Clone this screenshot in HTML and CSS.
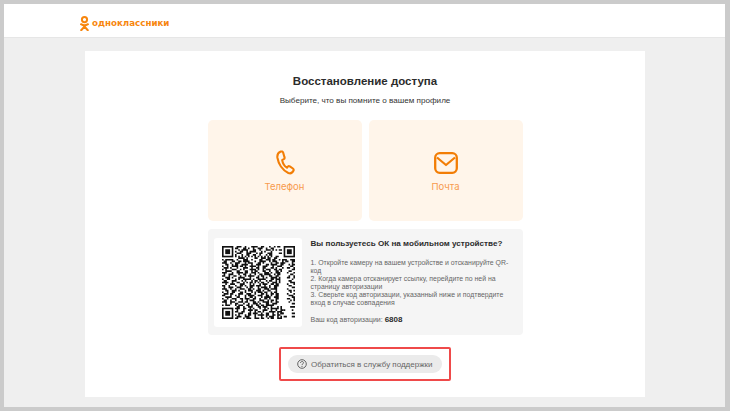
FILE: index.html
```html
<!DOCTYPE html>
<html lang="en">
<head>
    <meta charset="UTF-8">
    <meta name="viewport" content="width=device-width, initial-scale=1.0">
    <title>Восстановление доступа</title>
    <link rel="stylesheet" href="styles.css">
</head>
<body>
    <div class="page">
        <header class="topbar">
            <div class="logo">
                <svg class="logo-icon" viewBox="0 0 9 15" width="9" height="15">
                    <circle cx="4.5" cy="3.6" r="2.6" fill="none" stroke="#f7860e" stroke-width="2"/>
                    <path d="M1 8.2c2.2 1.5 4.8 1.500 7 0M4.5 9.6v.6M1.200 14.200l3.300-3.600 3.300 3.600" fill="none" stroke="#f7860e" stroke-width="2" stroke-linecap="round"/>
                </svg>
                <span class="logo-text">одноклассники</span>
            </div>
        </header>
        <main class="card">
            <h1>Восстановление доступа</h1>
            <p class="subtitle">Выберите, что вы помните о вашем профиле</p>
            <div class="options">
                <div class="option">
                    <div class="option-icon">
                        <svg class="phone-icon" viewBox="0 0 20 26" width="19" height="25">
                            <path d="M5 1.5C2.5 2.5 1 4.5 1.5 8 2.5 14 6.5 21 13 24c2.5 1 4.5-.5 5.5-2.500.3-1 0-1.700-.7-2.200L14.500 17c-.7-.4-1.500-.3-2 .3l-1 1.200C9 17 7 13.500 6.500 10.500l1.700-1c.8-.5 1-1.300.7-2.100L7.500 2.500C7.200 1.600 6 1.100 5 1.500z" fill="none" stroke="#f27d05" stroke-width="2.200" stroke-linejoin="round"/>
                        </svg>
                    </div>
                    <span>Телефон</span>
                </div>
                <div class="option">
                    <div class="option-icon">
                        <svg viewBox="0 0 24 22" width="24" height="22">
                            <rect x="1.200" y="1.200" width="21.600" height="19.600" rx="4.500" fill="none" stroke="#f27d05" stroke-width="2.300"/>
                            <path d="M3 5.500l9 7.500 9-7.500" fill="none" stroke="#f27d05" stroke-width="2.200" stroke-linejoin="round"/>
                        </svg>
                    </div>
                    <span>Почта</span>
                </div>
            </div>
            <section class="qr-panel">
                <div class="qr-box">
                    <svg class="qr" viewBox="0 0 45 45" width="73" height="73">
                        <g fill="none" stroke="#111">
                            <rect x=".5" y=".5" width="6" height="6"/>
                            <rect x="38.500" y=".5" width="6" height="6"/>
                            <rect x=".5" y="38.500" width="6" height="6"/>
                        </g>
                        <g fill="#111">
                            <rect x="2" y="2" width="3" height="3"/>
                            <rect x="40" y="2" width="3" height="3"/>
                            <rect x="2" y="40" width="3" height="3"/>
                        </g>
                        <path fill="none" stroke="#111" d="M9 .5h3m2 0h1m3 0h4m2 0h2m3 0h1m2 0h1
                            M8 1.500h2m3 0h2m1 0h1m2 0h1m2 0h3m2 0h1m2 0h2
                            M10 2.500h1m1 0h4m3 0h2m2 0h1m3 0h3m1 0h1
                            M8 3.500h1m2 0h2m2 0h1m1 0h4m3 0h1m1 0h1m3 0h1
                            M9 4.500h3m3 0h3m3 0h1m1 0h2m3 0h3
                            M8 5.500h1m3 0h1m2 0h2m2 0h2m2 0h1m3 0h1m1 0h2
                            M8 6.500h1m1 0h1m1 0h1m1 0h1m1 0h1m1 0h1m1 0h1m1 0h1m1 0h1m1 0h1m1 0h1m1 0h1
                            M10 7.500h4m1 0h1m4 0h2m2 0h3m1 0h2
                            M0 8.500h1m1 0h5m2 0h1m3 0h3m2 0h1m4 0h2m2 0h3m1 0h2m2 0h1m1 0h3
                            M1 9.500h2m3 0h2m2 0h2m1 0h4m3 0h1m2 0h4m2 0h1m1 0h3m3 0h1m1 0h1
                            M0 10.500h3m2 0h1m2 0h3m3 0h1m1 0h3m3 0h2m1 0h1m4 0h1m2 0h2m1 0h3
                            M2 11.500h2m2 0h1m1 0h2m2 0h4m2 0h1m2 0h3m3 0h2m1 0h4m2 0h2
                            M0 12.500h1m2 0h1m2 0h4m1 0h2m1 0h1m2 0h4m1 0h1m2 0h3m3 0h1m2 0h3
                            M1 13.500h3m1 0h1m3 0h1m3 0h3m2 0h1m2 0h2m2 0h2m3 0h2m1 0h1m3 0h1
                            M0 14.500h1m1 0h1m3 0h3m2 0h1m1 0h1m3 0h4m1 0h1m2 0h1m1 0h3m2 0h2m1 0h2
                            M2 15.500h4m3 0h2m3 0h2m2 0h1m1 0h2m3 0h2m2 0h1m3 0h2m1 0h1
                            M0 16.500h3m3 0h1m2 0h4m1 0h2m2 0h3m1 0h1m3 0h3m1 0h1m2 0h3
                            M1 17.500h1m2 0h3m3 0h1m2 0h2m2 0h1m2 0h1m2 0h2m1 0h4m2 0h1m1 0h2
                            M0 18.500h2m2 0h1m2 0h2m2 0h1m2 0h1m1 0h4m2 0h1m1 0h2m3 0h2m2 0h2
                            M2 19.500h3m1 0h1m3 0h4m3 0h1m3 0h2m2 0h1m1 0h1m2 0h4m1 0h1
                            M0 20.500h1m2 0h2m3 0h1m1 0h1m2 0h5m1 0h1m2 0h5m3 0h2m1 0h3
                            M1 21.500h2m3 0h3m3 0h1m1 0h1m3 0h1m1 0h2m1 0h1m3 0h1m1 0h2m2 0h1m1 0h1
                            M0 22.500h4m2 0h1m2 0h2m2 0h1m1 0h1m1 0h2m1 0h1m1 0h1m1 0h2m2 0h1m2 0h3m1 0h1
                            M2 23.500h1m2 0h3m3 0h3m3 0h1m1 0h1m3 0h1m1 0h3m2 0h2m1 0h2
                            M0 24.500h2m2 0h1m3 0h1m2 0h2m1 0h1m2 0h3m1 0h3m2 0h1m2 0h1m2 0h3
                            M1 25.500h1m2 0h3m2 0h3m3 0h1m1 0h2m3 0h1m1 0h4m1 0h1m2 0h2
                            M0 26.500h3m2 0h1m2 0h1m2 0h3m2 0h2m1 0h1m2 0h2m2 0h3m1 0h4
                            M2 27.500h2m2 0h3m1 0h1m3 0h1m1 0h3m2 0h3m1 0h1m2 0h2m3 0h1
                            M0 28.500h1m2 0h1m2 0h2m3 0h2m1 0h1m3 0h1m1 0h1m1 0h3m1 0h2m2 0h1m1 0h2
                            M1 29.500h3m1 0h2m3 0h3m2 0h3m2 0h1m3 0h2m1 0h1m2 0h2m1 0h2
                            M0 30.500h2m3 0h1m2 0h1m1 0h1m3 0h1m1 0h4m2 0h3m2 0h2m1 0h1m2 0h2
                            M2 31.500h4m3 0h2m3 0h1m2 0h2m1 0h1m3 0h1m1 0h4m2 0h3
                            M0 32.500h1m2 0h1m2 0h3m2 0h2m1 0h3m2 0h2m2 0h1m2 0h2m1 0h1m3 0h2
                            M1 33.500h2m2 0h1m2 0h1m3 0h1m2 0h1m1 0h3m3 0h3m2 0h1m1 0h2m1 0h1
                            M0 34.500h3m2 0h3m2 0h3m1 0h2m3 0h2m1 0h1m2 0h4m1 0h1m2 0h2
                            M2 35.500h1m2 0h1m2 0h2m3 0h1m2 0h1m2 0h3m1 0h1m3 0h2m2 0h3
                            M0 36.500h1m1 0h3m3 0h1m1 0h3m2 0h2m1 0h1m2 0h2m1 0h2m1 0h5
                            M9 37.500h2m2 0h1m2 0h3m3 0h2m1 0h3m2 0h1m3 0h1m1 0h1
                            M8 38.500h3m2 0h2m2 0h1m1 0h1m3 0h1m2 0h1m1 0h1m1 0h5m1 0h1
                            M9 39.500h1m3 0h1m2 0h3m1 0h2m3 0h3m2 0h1m2 0h1m2 0h2
                            M8 40.500h2m2 0h2m3 0h1m2 0h1m1 0h2m1 0h1m3 0h4m1 0h3
                            M10 41.500h3m3 0h2m1 0h3m2 0h1m2 0h2m2 0h1m2 0h1m1 0h2
                            M8 42.500h1m1 0h1m3 0h1m1 0h2m2 0h1m1 0h4m1 0h2m2 0h2m1 0h2
                            M9 43.500h3m2 0h3m3 0h1m3 0h1m2 0h1m1 0h3m2 0h1m1 0h1
                            M8 44.500h2m3 0h1m1 0h3m2 0h3m1 0h2m2 0h1m1 0h2m2 0h3"/>
                        <!-- right edge, rows above run short of the last columns -->
                        <path fill="none" stroke="#111" d="M34 .5h2M33 2.500h1m1 0h2M35 4.500h2M33 6.500h2M32 7.500h2
                            M42 8.500h3M40 9.500h1m2 0h2M43 10.500h1M41 11.500h1m1 0h2M42 12.500h2M40 13.500h2m2 0h1M43 14.500h2M41 15.500h2
                            M40 16.500h1m3 0h1M42 17.500h2M41 18.500h1m2 0h1M40 19.500h2m2 0h1M43 20.500h1M41 21.500h2M42 22.500h3M40 23.500h1m3 0h1
                            M41 24.500h2M43 25.500h2M40 26.500h1M41 27.500h2m1 0h1M42 28.500h1M40 29.500h1m3 0h1M41 30.500h3M43 31.500h2
                            M40 32.500h2m2 0h1M42 33.500h1m1 0h1M41 34.500h1M43 35.500h2M42 37.500h3M38 39.500h1m4 0h1M36 41.500h2m5 0h2M38 43.500h2m3 0h2"/>
                    </svg>
                </div>
                <div class="qr-text">
                    <h2>Вы пользуетесь ОК на мобильном устройстве?</h2>
                    <p class="steps">1. Откройте камеру на вашем устройстве и отсканируйте QR-код<br>
                    2. Когда камера отсканирует ссылку, перейдите по ней на страницу авторизации<br>
                    3. Сверьте код авторизации, указанный ниже и подтвердите вход в случае совпадения</p>
                    <p class="code">Ваш код авторизации: <strong>6808</strong></p>
                </div>
            </section>
            <div class="support-mark">
                <div class="support-btn">
                    <svg viewBox="0 0 10 10" width="10" height="10">
                        <circle cx="5" cy="5" r="4.300" fill="none" stroke="#555" stroke-width=".9"/>
                        <path d="M3.500 4c0-2 3-2 3-.2 0 1.100-1.500 1-1.500 2.200" fill="none" stroke="#555" stroke-width=".9"/>
                        <circle cx="5" cy="7.300" r=".6" fill="#555"/>
                    </svg>
                    <span>Обратиться в службу поддержки</span>
                </div>
            </div>
        </main>
    </div>
</body>
</html>
```
FILE: styles.css
```css
* {
    box-sizing: border-box;
}

body {
    margin: 0;
    height: 411px;
    padding: 4px 5px 4px 4px;
    background-color: #cbcbcb;
    font-family: "Liberation Sans", Arial, sans-serif;
    overflow: hidden;
}

.page {
    height: 403px;
    background-color: #efefef;
}

.topbar {
    height: 34px;
    padding: 5px 0 0 76px;
    background-color: #ffffff;
    border-bottom: 1px solid #e6e6e6;
    display: flex;
    align-items: center;
}

.logo {
    display: flex;
    align-items: center;
    gap: 3px;
}

.logo-text {
    font-family: "DejaVu Sans", sans-serif;
    font-size: 8.700px;
    font-weight: bold;
    color: #f7860e;
}

.card {
    width: 560px;
    height: 346px;
    margin: 13px 0 0 81px;
    padding-top: 23px;
    background-color: #ffffff;
    display: flex;
    flex-direction: column;
    align-items: center;
}

h1 {
    margin: 0;
    font-size: 11.500px;
    line-height: 15px;
    font-weight: bold;
    color: #2c2c2c;
}

.subtitle {
    margin: 6px 0 0;
    font-size: 8.100px;
    line-height: 12px;
    color: #333333;
}

.options {
    display: flex;
    gap: 7px;
    margin-top: 13px;
}

.option {
    width: 154px;
    height: 101px;
    padding-top: 30px;
    background-color: #fff5ea;
    border-radius: 5px;
    display: flex;
    flex-direction: column;
    align-items: center;
    font-family: Inter, sans-serif;
    font-size: 9.500px;
    line-height: 11px;
    color: #f79a4d;
}

.option-icon {
    height: 25px;
    margin-bottom: 6px;
    display: flex;
    align-items: center;
}

.phone-icon {
    margin-left: 2px;
}

.qr-panel {
    width: 315px;
    height: 106px;
    margin-top: 8px;
    padding: 9px 9px 8px 6px;
    background-color: #f5f5f5;
    border-radius: 4px;
    display: flex;
    gap: 9px;
}

.qr-box {
    flex: none;
    width: 88px;
    height: 89px;
    padding-left: 1px;
    background-color: #ffffff;
    border-radius: 3px;
    display: flex;
    align-items: center;
    justify-content: center;
}

.qr {
    display: block;
}

.qr-text {
    color: #666666;
}

h2 {
    margin: 0;
    font-size: 8.100px;
    line-height: 12px;
    font-weight: bold;
    color: #2c2c2c;
}

.steps {
    margin: 9px 0 0;
    font-size: 6.900px;
    line-height: 8px;
}

.code {
    margin: 7px 0 0;
    font-size: 7px;
    line-height: 12px;
}

.code strong {
    font-size: 8px;
    color: #2c2c2c;
}

.support-mark {
    margin-top: 12px;
    padding: 6px 7px;
    border: 2px solid #ef4a4a;
    border-radius: 2px;
}

.support-btn {
    width: 154px;
    height: 18px;
    padding-left: 9px;
    background-color: #ebebeb;
    border-radius: 9px;
    display: flex;
    align-items: center;
    gap: 4px;
    font-size: 8px;
    color: #666666;
}
```
